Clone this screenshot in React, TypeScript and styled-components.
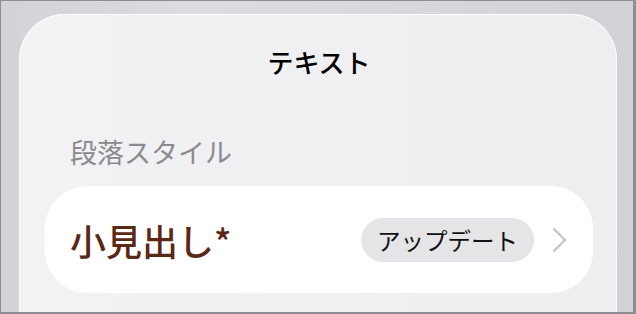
import React from "react";
import styled, { createGlobalStyle } from "styled-components";

const Global = createGlobalStyle`
  html, body { margin: 0; padding: 0; }
  body { font-family: "Noto Sans CJK JP", "Noto Sans", sans-serif; }
`;

const Frame = styled.div`
  box-sizing: border-box;
  width: 636px;
  height: 314px;
  overflow: hidden;
  border: 1px solid #8e8e92;
  border-right-width: 3px;
  border-bottom-width: 2px;
  background: linear-gradient(90deg, #d3d3d7 0%, #dcdce0 30%, #d9d9dd 60%, #d2d2d6 100%);
  padding: 13px 16px 0 18px;
  display: flex;
`;

const Sheet = styled.div`
  flex: 1;
  display: flex;
  flex-direction: column;
  background: linear-gradient(90deg, #f4f1f2 0%, #f1f1f4 20%, #eeeef1 100%);
  border-radius: 46px 46px 0 0;
  box-shadow: inset 0 1px 0 #ffffff, inset 1px 0 0 #fbfbfc, inset -1px 0 0 #fbfbfc;
  padding: 0 24px 0 26px;
`;

const Title = styled.div`
  margin-top: 30px;
  text-align: center;
  font-size: 26px;
  font-weight: 500;
  line-height: 36px;
  color: #000;
`;

const SectionLabel = styled.div`
  margin-top: 55px;
  padding-left: 25px;
  font-size: 27px;
  line-height: 34px;
  color: #8a8a8e;
`;

const Card = styled.div`
  margin-top: 17px;
  height: 107px;
  border-radius: 42px;
  background: #ffffff;
  display: flex;
  align-items: center;
  padding: 0 26px 0 25px;
`;

const Heading = styled.div`
  flex: 1;
  font-size: 36px;
  font-weight: 500;
  color: #5b2816;
  line-height: 1;
`;

const Pill = styled.div`
  height: 44px;
  padding: 0 16px;
  border-radius: 22px;
  background: #e5e5e7;
  display: flex;
  align-items: center;
  font-size: 23.5px;
  color: #111;
  margin-right: 18px;
`;

const Chevron = styled.svg`
  width: 15px;
  height: 26px;
  display: block;
`;

export default function App() {
  return (
    <>
      <Global />
      <Frame>
        <Sheet>
          <Title>テキスト</Title>
          <SectionLabel>段落スタイル</SectionLabel>
          <Card>
            <Heading>小見出し*</Heading>
            <Pill>アップデート</Pill>
            <Chevron viewBox="0 0 15 26">
              <path d="M2 2 L13 13 L2 24" fill="none" stroke="#c4c4c7" strokeWidth="2.2" strokeLinecap="round" strokeLinejoin="round" />
            </Chevron>
          </Card>
        </Sheet>
      </Frame>
    </>
  );
}
